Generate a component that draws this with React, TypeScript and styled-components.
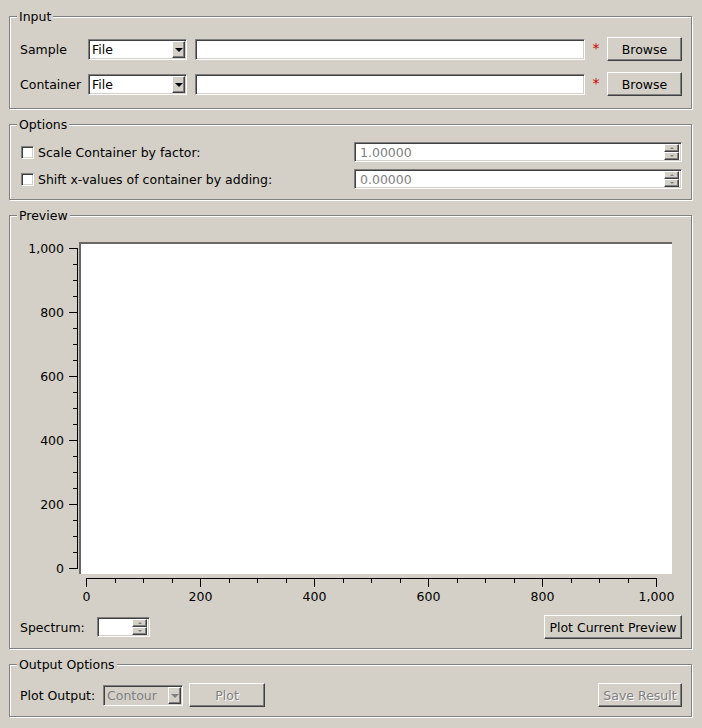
import React from "react";
import styled, { createGlobalStyle, css } from "styled-components";

const GlobalStyle = createGlobalStyle`
  * {
    box-sizing: border-box;
  }
  html,
  body {
    margin: 0;
    padding: 0;
    background: #d4d0c8;
  }
  body {
    font-family: "DejaVu Sans", "Liberation Sans", sans-serif;
    font-size: 12.5px;
    line-height: 15px;
    color: #000000;
  }
`;

const sunken = css`
  background: #ffffff;
  border: 1px solid;
  border-color: #808080 #ffffff #ffffff #808080;
  box-shadow: inset 1px 1px 0 #404040, inset -1px -1px 0 #d4d0c8;
`;

const raised = css`
  background: #d4d0c8;
  border: 1px solid;
  border-color: #ffffff #404040 #404040 #ffffff;
  box-shadow: inset -1px -1px 0 #808080;
`;

function App() {
  return (
    <>
      <GlobalStyle />
      <Page>
        <Group $padBottom={12}>
          <Title>Input</Title>
          <FileRow $top={13}>
            <RowLabel $width={68}>Sample</RowLabel>
            <Combo value="File" width={99} gap={8} />
            <PathField />
            <Required>*</Required>
            <Button $width={75}>Browse</Button>
          </FileRow>
          <FileRow $top={11}>
            <RowLabel $width={68}>Container</RowLabel>
            <Combo value="File" width={99} gap={8} />
            <PathField />
            <Required>*</Required>
            <Button $width={75}>Browse</Button>
          </FileRow>
        </Group>

        <Group $padBottom={10}>
          <Title>Options</Title>
          <OptionsGrid>
            <CheckRow>
              <CheckBox />
              <span>Scale Container by factor:</span>
            </CheckRow>
            <SpinBox value="1.00000" muted />
            <CheckRow>
              <CheckBox />
              <span>Shift x-values of container by adding:</span>
            </CheckRow>
            <SpinBox value="0.00000" muted />
          </OptionsGrid>
        </Group>

        <Group $padBottom={9}>
          <Title>Preview</Title>
          <Chart />
          <ControlRow $top={9}>
            <RowLabel $width={77}>Spectrum:</RowLabel>
            <SpinBox value="" width={53} />
            <Spacer />
            <Button $width={138}>Plot Current Preview</Button>
          </ControlRow>
        </Group>

        <Group $padBottom={9}>
          <Title>Output Options</Title>
          <ControlRow $top={11}>
            <RowLabel $width={83}>Plot Output:</RowLabel>
            <Combo value="Contour" width={80} gap={6} disabled />
            <Button $width={76} disabled>
              Plot
            </Button>
            <Spacer />
            <Button $width={84} disabled>
              Save Result
            </Button>
          </ControlRow>
        </Group>
      </Page>
    </>
  );
}

export default App;

function Combo({
  value,
  width,
  gap,
  disabled,
}: {
  value: string;
  width: number;
  gap: number;
  disabled?: boolean;
}) {
  return (
    <ComboBox $width={width} $gap={gap} $disabled={disabled}>
      <ComboText $disabled={disabled}>{value}</ComboText>
      <DropButton>
        <DownArrow $disabled={disabled} />
      </DropButton>
    </ComboBox>
  );
}

function SpinBox({
  value,
  width,
  muted,
}: {
  value: string;
  width?: number;
  muted?: boolean;
}) {
  return (
    <SpinField $width={width}>
      <SpinText $muted={muted}>{value}</SpinText>
      <SpinButtons>
        <SpinButton>
          <TinyArrow $up />
        </SpinButton>
        <SpinButton>
          <TinyArrow />
        </SpinButton>
      </SpinButtons>
    </SpinField>
  );
}

// plot canvas + axes, coords relative to the svg box (page x-20, y-230)
function Chart() {
  const yTicks = [];
  for (let i = 0; i <= 20; i++) {
    const y = 18 + i * 16 + 0.5;
    const major = i % 4 === 0;
    yTicks.push(
      <line key={"y" + i} x1={major ? 49 : 53} x2={58} y1={y} y2={y} />
    );
  }
  const xTicks = [];
  for (let i = 0; i <= 20; i++) {
    const x = Math.round(66 + i * 28.5) + 0.5;
    const major = i % 4 === 0;
    xTicks.push(
      <line key={"x" + i} x1={x} x2={x} y1={348} y2={major ? 357 : 353} />
    );
  }
  const labels = ["1,000", "800", "600", "400", "200", "0"];
  const xLabels = ["0", "200", "400", "600", "800", "1,000"];

  return (
    <PlotSvg width="662" height="376" viewBox="0 0 662 376">
      <rect x="59" y="12" width="593" height="332" fill="#ffffff" />
      <rect x="59" y="12" width="593" height="2" fill="#6a6864" />
      <rect x="59" y="12" width="2" height="332" fill="#6a6864" />
      <g stroke="#000000" strokeWidth="1">
        <line x1="57.5" x2="57.5" y1="18" y2="339" />
        {yTicks}
        <line x1="66" x2="637" y1="348.5" y2="348.5" />
        {xTicks}
      </g>
      <g fill="#000000" fontSize="12.5">
        {labels.map((l, i) => (
          <text key={l} x="44" y={18 + i * 64 + 5} textAnchor="end">
            {l}
          </text>
        ))}
        {xLabels.map((l, i) => (
          <text key={l} x={66 + i * 114 + 0.5} y="371" textAnchor="middle">
            {l}
          </text>
        ))}
      </g>
    </PlotSvg>
  );
}

const Page = styled.div`
  width: 702px;
  height: 728px;
  padding: 16px 10px 0 9px;
  display: flex;
  flex-direction: column;
  row-gap: 15px;
`;

const Group = styled.section<{ $padBottom: number }>`
  display: flex;
  flex-direction: column;
  border: 1px solid #808080;
  box-shadow: inset 1px 1px 0 #ffffff, 1px 1px 0 #ffffff;
  padding: 0 9px ${(p) => p.$padBottom}px 10px;
`;

const Title = styled.div`
  align-self: flex-start;
  margin: -8px 0 0 -3px;
  padding: 0 2px;
  height: 15px;
  background: #d4d0c8;
`;

const FileRow = styled.div<{ $top: number }>`
  display: flex;
  align-items: center;
  height: 24px;
  margin-top: ${(p) => p.$top}px;
`;

const ControlRow = styled(FileRow)``;

const RowLabel = styled.span<{ $width: number }>`
  width: ${(p) => p.$width}px;
  flex: none;
  white-space: nowrap;
`;

const Spacer = styled.div`
  flex: 1;
`;

const ComboBox = styled.div<{
  $width: number;
  $gap: number;
  $disabled?: boolean;
}>`
  ${sunken};
  ${(p) =>
    p.$disabled &&
    css`
      background: #d4d0c8;
    `}
  width: ${(p) => p.$width}px;
  height: 21px;
  flex: none;
  display: flex;
  align-items: center;
  padding: 1px 1px 1px 3px;
  margin-right: ${(p) => p.$gap}px;
`;

const ComboText = styled.span<{ $disabled?: boolean }>`
  flex: 1;
  color: ${(p) => (p.$disabled ? "#808080" : "#000000")};
`;

const DropButton = styled.div`
  ${raised};
  width: 13px;
  height: 17px;
  display: flex;
  align-items: center;
  justify-content: center;
`;

const DownArrow = styled.div<{ $disabled?: boolean }>`
  width: 0;
  height: 0;
  border-left: 4px solid transparent;
  border-right: 4px solid transparent;
  border-top: 4px solid ${(p) => (p.$disabled ? "#808080" : "#000000")};
  margin-top: 1px;
`;

const PathField = styled.div`
  ${sunken};
  flex: 1;
  height: 21px;
`;

const Required = styled.span`
  color: #cc0000;
  width: 22px;
  flex: none;
  text-align: center;
  font-size: 14px;
  margin-top: -1px;
`;

const Button = styled.button<{ $width: number }>`
  ${raised};
  width: ${(p) => p.$width}px;
  height: 24px;
  flex: none;
  padding: 0;
  font-family: inherit;
  font-size: 12.5px;
  color: #000000;
  &:disabled {
    color: #808080;
    text-shadow: 1px 1px 0 #ffffff;
  }
`;

const OptionsGrid = styled.div`
  display: grid;
  grid-template-columns: 1fr 328px;
  row-gap: 7px;
  margin-top: 10px;
`;

const CheckRow = styled.label`
  display: flex;
  align-items: center;
  column-gap: 4px;
  height: 20px;
  padding-left: 1px;
`;

const CheckBox = styled.span`
  ${sunken};
  width: 13px;
  height: 13px;
  flex: none;
`;

const SpinField = styled.div<{ $width?: number }>`
  ${sunken};
  width: ${(p) => (p.$width ? p.$width + "px" : "auto")};
  height: 20px;
  flex: none;
  display: flex;
  align-items: center;
  padding: 1px 2px 1px 5px;
`;

const SpinText = styled.span<{ $muted?: boolean }>`
  flex: 1;
  color: ${(p) => (p.$muted ? "#808080" : "#000000")};
`;

const SpinButtons = styled.div`
  display: flex;
  flex-direction: column;
  width: 15px;
  height: 16px;
`;

const SpinButton = styled.div`
  ${raised};
  flex: 1;
  display: flex;
  align-items: center;
  justify-content: center;
`;

const TinyArrow = styled.div<{ $up?: boolean }>`
  width: 0;
  height: 0;
  border-left: 2px solid transparent;
  border-right: 2px solid transparent;
  ${(p) =>
    p.$up
      ? css`
          border-bottom: 2px solid #808080;
        `
      : css`
          border-top: 2px solid #808080;
        `}
`;

const PlotSvg = styled.svg`
  display: block;
  margin-top: 7px;
  font-family: "DejaVu Sans", sans-serif;
`;
